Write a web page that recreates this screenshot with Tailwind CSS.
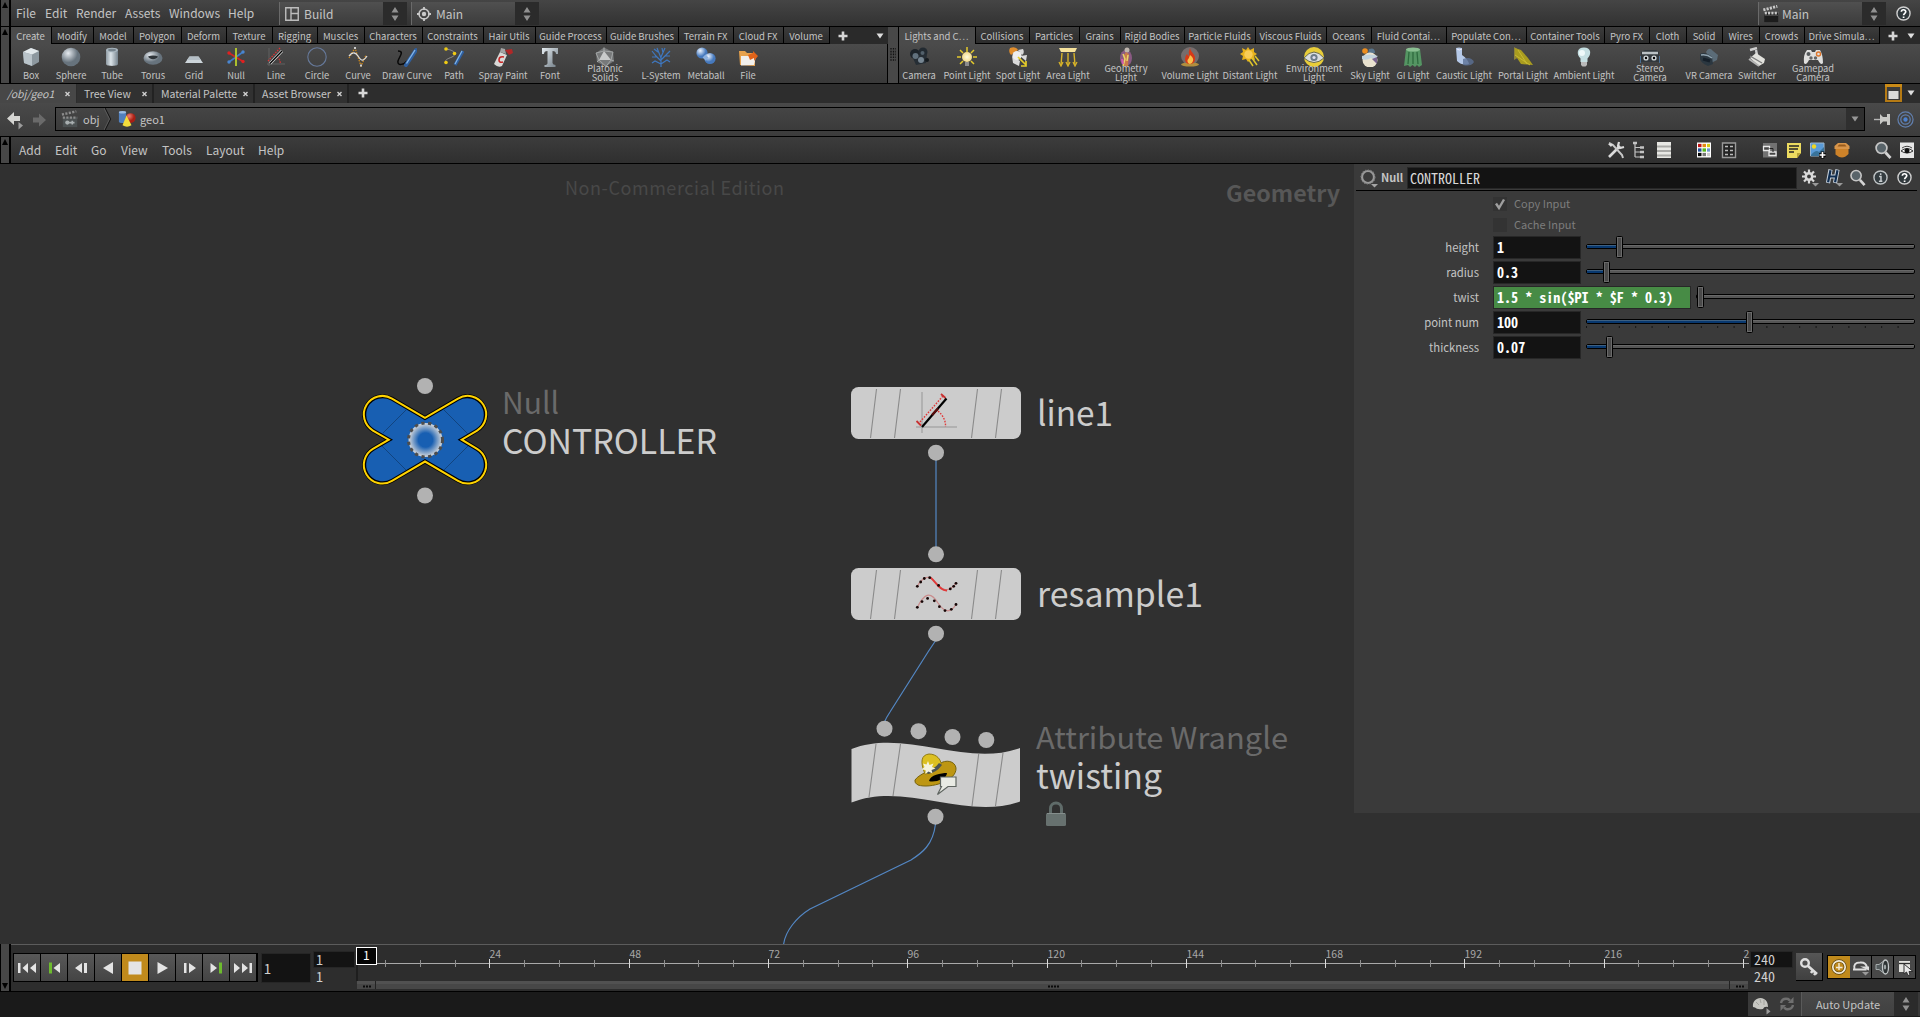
<!DOCTYPE html>
<html lang="en">
<head>
<meta charset="utf-8">
<title>/obj/geo1</title>
<script src="https://cdn.jsdelivr.net/npm/@tailwindcss/browser@4"></script>
</head>
<body class="h-[1017px] w-[1920px] overflow-hidden bg-[#1a1a1a] font-['Noto_Sans_CJK_SC',sans-serif] text-[#c4c4c4]">
<div class="flex h-full flex-col">

  <!-- main menu -->
  <header class="flex h-[27px] shrink-0 border-b border-black bg-linear-to-b from-[#454545] to-[#323232]">
    <div data-grip="up"></div>
    <nav class="flex w-[268px] items-center pb-px pl-[5px] text-[12px] leading-none" data-menu="File:29,Edit:31,Render:49,Assets:44,Windows:59,Help:50"></nav>
    <div class="mt-[2px] flex h-[23px] w-[104px] items-center border-l border-[#6a6a6a] bg-linear-to-b from-[#505050] to-[#3c3c3c]">
      <span class="ml-[5px] h-[14px] w-[14px]" data-i="layout"></span><span class="ml-[5px] text-[12px] leading-none">Build</span>
    </div>
    <div class="mt-[2px] flex h-[23px] w-[24px] items-center justify-center bg-[#2b2b2b]"><span class="h-[14px] w-[8px]" data-i="spin"></span></div>
    <div class="mt-[2px] ml-[4px] flex h-[23px] w-[104px] items-center border-l border-[#6a6a6a] bg-linear-to-b from-[#505050] to-[#3c3c3c]">
      <span class="ml-[4px] h-[16px] w-[16px]" data-i="target"></span><span class="ml-[4px] text-[12px] leading-none">Main</span>
    </div>
    <div class="mt-[2px] flex h-[23px] w-[24px] items-center justify-center bg-[#2b2b2b]"><span class="h-[14px] w-[8px]" data-i="spin"></span></div>
    <div class="grow"></div>
    <div class="mt-[2px] flex h-[23px] w-[104px] items-center border-l border-[#6a6a6a] bg-linear-to-b from-[#505050] to-[#3c3c3c]">
      <span class="ml-[3px] h-[18px] w-[18px]" data-i="clapper"></span><span class="ml-[2px] text-[12px] leading-none">Main</span>
    </div>
    <div class="mt-[2px] flex h-[23px] w-[24px] items-center justify-center bg-[#2b2b2b]"><span class="h-[14px] w-[8px]" data-i="spin"></span></div>
    <div class="flex w-[34px] items-center justify-center"><span class="h-[15px] w-[15px]" data-i="help"></span></div>
  </header>

  <!-- shelves -->
  <section class="flex h-[57px] shrink-0 border-b border-black">
    <div data-grip="up"></div>
    <div class="flex w-[877px] flex-col">
      <div class="flex h-[17px] bg-[#2a2a2a]">
        <div class="flex" data-tabs="Create:41,Modify:42,Model:40,Polygon:48,Deform:45,Texture:46,Rigging:45,Muscles:47,Characters:58,Constraints:61,Hair Utils:52,Guide Process:71,Guide Brushes:72,Terrain FX:55,Cloud FX:50,Volume:46"></div>
        <span class="ml-[8px] mt-[4px] h-[10px] w-[10px]" data-i="plus"></span>
        <span class="ml-[28px] mt-[6px] h-[6px] w-[8px]" data-i="down"></span>
      </div>
      <div class="flex h-[39px] border-r border-black bg-linear-to-b from-[#4b4b4b] to-[#393939] pl-[2px]" data-start="13" data-tools="Box@31:box,Sphere@71:sphere,Tube@112:tube,Torus@153:torus,Grid@194:grid,Null@236:nul,Line@276:line,Circle@317:circle,Curve@358:curve,Draw Curve@407:draw,Path@454:path,Spray Paint@503:spray,Font@550:font,Platonic|Solids@605:plato,L-System@661:lsys,Metaball@706:meta,File@748:file"></div>
    </div>
    <div class="flex w-[11px] items-center justify-center border-r border-black bg-[#484848]"><span class="h-[14px] w-[6px]" data-i="grid3"></span></div>
    <div class="flex w-[1021px] flex-col">
      <div class="flex h-[17px] bg-[#2a2a2a]">
        <div class="flex" data-tabs="Lights and C…:77,Collisions:54,Particles:50,Grains:41,Rigid Bodies:64,Particle Fluids:71,Viscous Fluids:71,Oceans:45,Fluid Contai…:75,Populate Con…:80,Container Tools:78,Pyro FX:45,Cloth:37,Solid:36,Wires:37,Crowds:45,Drive Simula…:75"></div>
        <span class="ml-[8px] mt-[4px] h-[10px] w-[10px]" data-i="plus"></span>
        <span class="ml-[9px] mt-[6px] h-[6px] w-[8px]" data-i="down"></span>
      </div>
      <div class="flex h-[39px] bg-linear-to-b from-[#4b4b4b] to-[#393939] pl-[1px]" data-start="900" data-tools="Camera@919:camera,Point Light@967:point,Spot Light@1018:spot,Area Light@1068:area,Geometry|Light@1126:geol,Volume Light@1190:fire,Distant Light@1250:sun,Environment|Light@1314:env,Sky Light@1370:sky,GI Light@1413:gi,Caustic Light@1464:caustic,Portal Light@1523:portal,Ambient Light@1584:bulb,Stereo|Camera@1650:stereo,VR Camera@1709:vr,Switcher@1757:switch,Gamepad|Camera@1813:pad"></div>
    </div>
  </section>

  <!-- pane tabs -->
  <div class="flex h-[19px] shrink-0 items-stretch bg-[#2d2d2d] text-[10.5px] leading-[19px] whitespace-nowrap">
    <div class="flex w-[76px] justify-between bg-[#474747] pl-[7px] pr-[6px] italic"><span>/obj/geo1</span><span class="h-[19px] w-[5px]" data-i="close"></span></div>
    <div class="ml-px flex w-[77px] justify-between border-r-2 border-[#222] bg-[#313131] pl-[7px] pr-[5px]"><span>Tree View</span><span class="h-[19px] w-[5px]" data-i="close"></span></div>
    <div class="flex w-[101px] justify-between border-r-2 border-[#222] bg-[#313131] pl-[7px] pr-[5px]"><span>Material Palette</span><span class="h-[19px] w-[5px]" data-i="close"></span></div>
    <div class="flex w-[94px] justify-between border-r-2 border-[#222] bg-[#313131] pl-[7px] pr-[5px]"><span>Asset Browser</span><span class="h-[19px] w-[5px]" data-i="close"></span></div>
    <span class="mt-[4px] ml-[9px] h-[10px] w-[10px]" data-i="plus"></span>
    <div class="grow"></div>
    <span class="mr-[5px] h-[18px] w-[17px]" data-i="pane"></span>
    <span class="mt-[6px] mr-[5px] h-[6px] w-[8px]" data-i="down"></span>
  </div>

  <!-- path bar -->
  <div class="flex h-[34px] shrink-0 items-center border-b border-black bg-linear-to-b from-[#494949] to-[#3c3c3c] pb-px">
    <span class="ml-[6px] mt-[4px] h-[18px] w-[18px]" data-i="back"></span>
    <span class="ml-[7px] mt-[1px] h-[18px] w-[18px]" data-i="fwd"></span>
    <div class="ml-[6px] flex h-[24px] w-[1810px] items-center border border-black bg-linear-to-b from-[#454545] to-[#3b3b3b] text-[11px] leading-none">
      <span class="ml-[5px] h-[18px] w-[18px]" data-i="clapper2"></span><span class="ml-[4px] w-[21px]">obj</span>
      <span class="h-[22px] w-[8px]" data-i="chev"></span>
      <span class="ml-[6px] h-[18px] w-[18px]" data-i="geo"></span><span class="ml-[4px]">geo1</span>
      <div class="grow"></div>
      <div class="flex h-full w-[18px] items-center justify-center bg-[#2f2f2f]"><span class="h-[6px] w-[8px] opacity-60" data-i="down"></span></div>
    </div>
    <span class="ml-[9px] h-[16px] w-[17px]" data-i="pin"></span>
    <span class="ml-[6px] h-[17px] w-[17px]" data-i="radial"></span>
  </div>

  <!-- network menu -->
  <div class="flex h-[27px] shrink-0 border-b border-black bg-linear-to-b from-[#3c3c3c] to-[#2f2f2f]">
    <div data-grip="up"></div>
    <nav class="flex items-center pb-px pl-[8px] text-[12px] leading-none" data-menu="Add:36,Edit:36,Go:30,View:41,Tools:44,Layout:52,Help:50"></nav>
    <div class="grow"></div>
    <div class="flex items-center pr-[4px]">
      <span class="h-[18px] w-[18px]" data-i="wrench"></span>
      <span class="ml-[6px] h-[18px] w-[18px]" data-i="tree"></span>
      <span class="ml-[6px] h-[18px] w-[18px]" data-i="list"></span>
      <span class="ml-[22px] h-[18px] w-[18px]" data-i="palette"></span>
      <span class="ml-[7px] h-[18px] w-[18px]" data-i="table"></span>
      <span class="ml-[23px] h-[18px] w-[18px]" data-i="boxes"></span>
      <span class="ml-[6px] h-[18px] w-[18px]" data-i="note"></span>
      <span class="ml-[6px] h-[18px] w-[18px]" data-i="image"></span>
      <span class="ml-[6px] h-[18px] w-[18px]" data-i="crate"></span>
      <span class="ml-[23px] h-[18px] w-[18px]" data-i="search"></span>
      <span class="ml-[6px] h-[18px] w-[18px]" data-i="eye"></span>
    </div>
  </div>

  <!-- network canvas and parameters -->
  <main class="relative h-[780px] shrink-0 bg-[#303030]">
    <svg class="absolute inset-0 h-[780px] w-[1354px]" viewBox="0 164 1354 780">
      <defs>
        <radialGradient id="core"><stop offset=".42" stop-color="#185fb2"/><stop offset=".95" stop-color="#c9d0d8"/></radialGradient>
        <g id="slats" stroke="#8a8a8a" stroke-width="1.1"><path d="M876.500 389L870.500 438M900.500 389L894.500 438M977.500 389L971.500 438M1001.500 389L995.500 438"/></g>
      </defs>
      <text x="565" y="194.500" font-size="18" fill="#484848" textLength="219">Non-Commercial Edition</text>
      <text x="1226" y="202" font-size="22" font-weight="700" fill="#575757" textLength="114" lengthAdjust="spacingAndGlyphs">Geometry</text>
      <g fill="none" stroke="#5387c4" stroke-width="1.2">
        <path d="M936 460V547M936 640L928 652L890 712Q886 718 884.500 722M935.500 824C933 845 922 853 911 860L810 909C797 917 785 931 783.500 945"/>
      </g>
      <!-- null node -->
      <path d="M425 418L392.200 398.800A18.500 18.500 0 1 0 373.200 430.600L389 439.700L373.200 448.800A18.500 18.500 0 1 0 392.200 480.600L425 461.400L457.800 480.600A18.500 18.500 0 1 0 476.800 448.800L461.500 439.700L476.800 430.600A18.500 18.500 0 1 0 457.800 398.800Z" fill="#185fb2" stroke="#000" stroke-width="4"/>
      <path d="M425 418L392.200 398.800A18.500 18.500 0 1 0 373.200 430.600L389 439.700L373.200 448.800A18.500 18.500 0 1 0 392.200 480.600L425 461.400L457.800 480.600A18.500 18.500 0 1 0 476.800 448.800L461.500 439.700L476.800 430.600A18.500 18.500 0 1 0 457.800 398.800Z" fill="none" stroke="#ffd300" stroke-width="2" transform="translate(425 439.700) scale(1.006) translate(-425 -439.700)"/>
      <path d="M406 410L383 433M444 410L468 434M382 446L406 470M468 446L444 470" stroke="#114480" stroke-width="1"/>
      <circle cx="425.500" cy="440" r="17" fill="url(#core)"/>
      <circle cx="425.500" cy="440" r="17" fill="none" stroke="#4d4d4d" stroke-width="3" stroke-dasharray="3.300 3.550"/>
      <g fill="#b2b2b2">
        <circle cx="425" cy="386" r="8"/><circle cx="425" cy="495.500" r="8"/>
        <circle cx="936" cy="452.700" r="8"/><circle cx="936" cy="554.300" r="8"/><circle cx="936" cy="633.700" r="8"/>
        <circle cx="884.500" cy="728.700" r="8"/><circle cx="918.500" cy="731.200" r="8"/><circle cx="952.500" cy="737" r="8"/><circle cx="986.300" cy="740" r="8"/>
        <circle cx="935.500" cy="816.700" r="8"/>
      </g>
      <!-- line1 -->
      <rect x="851" y="387" width="170" height="52" rx="7.500" fill="#cccccc"/><use href="#slats"/>
      <path d="M922 392V433M916 427H957" stroke="#a8a8a8" stroke-width="1.500"/>
      <path d="M920 422L943 396M938 411Q946 418 945.500 427" fill="none" stroke="#e03a3a" stroke-width="1.400" stroke-dasharray="1.600 1.400"/>
      <path d="M916.500 421L921 425.500M941 394L945.500 398" stroke="#c83232" stroke-width="1.800"/>
      <path d="M922 427L946.500 398.500" stroke="#000" stroke-width="2.200"/><path d="M932 415L938 408.500" stroke="#5a0c0c" stroke-width="2.200"/>
      <!-- resample1 -->
      <rect x="851" y="568" width="170" height="52" rx="7.500" fill="#cccccc"/><use href="#slats" y="181"/>
      <g fill="none" stroke="#c98d8d" stroke-width="1.300">
        <path d="M917.200 586.300C922 578 928 573 936 583C943 592 949 592 956 583.300M917.200 607.500C924 594 930 590 938 603C944 612 950 614 956 604.500"/>
        <path d="M930.500 577.500C936 582 940 591 947 590.500" stroke="#e03a3a" stroke-width="1.800"/>
      </g>
      <g fill="#160606">
        <circle cx="917.300" cy="586.300" r="1.400"/><circle cx="920.700" cy="582" r="1.400"/><circle cx="924.300" cy="578.500" r="1.400"/><circle cx="929.700" cy="577.700" r="1.400"/><circle cx="938.600" cy="585.400" r="1.400"/><circle cx="950.300" cy="588.900" r="1.400"/><circle cx="953.700" cy="586.300" r="1.400"/><circle cx="956" cy="583.300" r="1.400"/>
        <circle cx="917.300" cy="607.300" r="1.400"/><circle cx="922" cy="601.600" r="1.400"/><circle cx="927.600" cy="598.400" r="1.400"/><circle cx="934.300" cy="600.800" r="1.400"/><circle cx="939.400" cy="606.700" r="1.400"/><circle cx="945" cy="610.600" r="1.400"/><circle cx="951.300" cy="609.300" r="1.400"/><circle cx="956" cy="604.500" r="1.400"/>
      </g>
      <!-- twisting -->
      <path d="M851.500 749C905 728 966 768 1020 748V801.500C966 821 905 781 851.500 802.500Z" fill="#cccccc"/>
      <path d="M876 744L869 797M900.500 744L893 796M978.700 754L972 806M1003 753L995.500 806" stroke="#8a8a8a" stroke-width="1.100"/>
      <path d="M915 780C920 773 932 771 939 764C946 759 955 761 956 768C957 781 930 789 918 785Q914 783 915 780Z" fill="#bd9612" stroke="#77630f"/>
      <path d="M925 774C920 762 921 755 929 754C937 754 941 760 941 764C938 769 932 773 925 774Z" fill="#dcc021" stroke="#8f7a15"/>
      <path d="M925 771Q934 770 939 763L942 765Q936 773 928 774Z" fill="#4a5355"/>
      <path d="M929 781C930 775 941 773 947 773C947 779 934 783 929 781Z" fill="#000"/>
      <path d="M928 761l1.500 4 4-1.500-1.500 3.500 3.500 1.500-4 1.500 1 3.500-4-2-3 2.500v-4l-4-.5 3-2.500-1.500-3.500 3.500 1z" fill="#f4f2dd"/>
      <path d="M940.500 777H956V786.500H948L937.500 794.500L941.500 786.500H940.500Z" fill="#e9ebe4" stroke="#5f6560" stroke-width="1.200"/>
      <!-- labels -->
      <g font-size="34" fill="#cccccc">
        <text x="502" y="454" textLength="215" lengthAdjust="spacingAndGlyphs">CONTROLLER</text>
        <text x="1037" y="426" textLength="76" lengthAdjust="spacingAndGlyphs">line1</text>
        <text x="1037" y="607" textLength="166" lengthAdjust="spacingAndGlyphs">resample1</text>
        <text x="1036" y="789" textLength="126" lengthAdjust="spacingAndGlyphs">twisting</text>
      </g>
      <g font-size="30" fill="#6a6a6a">
        <text x="502" y="414" textLength="57" lengthAdjust="spacingAndGlyphs">Null</text>
        <text x="1036" y="748.500" textLength="252" lengthAdjust="spacingAndGlyphs">Attribute Wrangle</text>
      </g>
      <path d="M1050.500 814V808.500A5.500 5.500 0 0 1 1061.500 808.500V814" fill="none" stroke="#5f6b69" stroke-width="3"/><rect x="1046" y="813" width="20" height="13" rx="1.500" fill="#67716f"/><path d="M1047 813.500H1065" stroke="#858e8c"/>
    </svg>

    <aside class="absolute top-0 right-0 h-[649px] w-[566px] bg-[#3a3a3a]">
      <div class="ml-[2px] mr-[3px] flex h-[27px] items-center border-b border-black">
        <span class="ml-[4px] mt-[2px] h-[20px] w-[18px]" data-i="ring"></span>
        <span class="ml-[3px] w-[26px] text-[11px] leading-none font-bold">Null</span>
        <div class="mt-px flex h-[22px] w-[390px] items-center border border-[#272727] bg-[#131313] pl-[2px] font-['Noto_Sans_Mono_CJK_SC','DejaVu_Sans_Mono',monospace] text-[14px] leading-none text-[#d8d8d8]">CONTROLLER</div>
        <span class="ml-[4px] h-[20px] w-[18px]" data-i="gear"></span>
        <span class="ml-[6px] h-[20px] w-[18px]" data-i="hlogo"></span>
        <span class="ml-[6px] h-[17px] w-[17px]" data-i="search"></span>
        <span class="ml-[7px] h-[15px] w-[15px]" data-i="info"></span>
        <span class="ml-[9px] h-[15px] w-[15px]" data-i="help"></span>
      </div>
      <div class="mt-[2px] flex h-[21px] items-center pl-[139px] text-[11px] leading-none text-[#7d7d7d]"><span class="mr-[7px] h-[14px] w-[14px] bg-[#333]" data-i="check"></span>Copy Input</div>
      <div class="flex h-[21px] items-center pl-[139px] text-[11px] leading-none text-[#7d7d7d]"><span class="mr-[7px] h-[14px] w-[14px] bg-[#333]"></span>Cache Input</div>
      <div id="params"></div>
    </aside>
  </main>

  <!-- playbar -->
  <section class="flex h-[48px] shrink-0 border-b border-black bg-[#2d2d2d]">
    <div data-grip="down"></div>
    <div class="flex h-full w-[1909px] border-t border-[#5c5c5c]">
      <div class="mt-[8px] ml-[2px] flex h-[29px] w-[245px] shrink-0 border border-black bg-black" id="play"></div>
      <div class="mt-[8px] ml-[3px] flex h-[30px] w-[50px] shrink-0 items-center border border-[#262626] bg-[#131313] pl-[2px] font-['Noto_Sans_Mono_CJK_SC','DejaVu_Sans_Mono',monospace] text-[14px] leading-none text-[#d0d0d0]">1</div>
      <div class="ml-[2px] w-[42px] shrink-0 pt-[6px] font-['Noto_Sans_Mono_CJK_SC','DejaVu_Sans_Mono',monospace] text-[14px] text-[#d0d0d0]">
        <div class="h-[17px] border border-[#262626] bg-[#131313] pl-[2px] leading-[15px]">1</div>
        <div class="h-[17px] pl-[3px] leading-[17px]">1</div>
      </div>
      <svg class="ml-px h-[46px] w-[1394px] shrink-0" viewBox="356 945 1394 46" id="time"></svg>
      <div class="w-[43px] shrink-0 pt-[6px] font-['Noto_Sans_Mono_CJK_SC','DejaVu_Sans_Mono',monospace] text-[14px] text-[#d0d0d0]">
        <div class="h-[17px] border border-[#262626] bg-[#131313] pl-[3px] leading-[15px]">240</div>
        <div class="h-[17px] pl-[4px] leading-[17px]">240</div>
      </div>
      <div class="mt-[8px] ml-[3px] flex h-[28px] w-[27px] shrink-0 items-center justify-center border-r border-b border-black bg-linear-to-b from-[#565656] to-[#404040]"><span class="h-[20px] w-[20px]" data-i="key"></span></div>
      <div class="mt-[10px] ml-[4px] flex h-[24px] shrink-0 border border-black">
        <div class="flex w-[22px] items-center justify-center bg-[#c08a1c]"><span class="h-[16px] w-[16px]" data-i="clock"></span></div>
        <div class="flex w-[22px] items-center justify-center border-r border-black bg-[#484848]"><span class="h-[18px] w-[18px]" data-i="loop"></span></div>
        <div class="flex w-[22px] items-center justify-center border-r border-black bg-[#484848]"><span class="h-[18px] w-[18px]" data-i="audio"></span></div>
        <div class="flex w-[21px] items-center justify-center bg-[#484848]"><span class="h-[18px] w-[18px]" data-i="cursor"></span></div>
      </div>
    </div>
  </section>

  <!-- status -->
  <footer class="flex h-[25px] shrink-0 justify-end">
    <div class="flex h-[24px] w-[172px] bg-[#393939]">
      <span class="mt-[3px] ml-[3px] h-[20px] w-[20px]" data-i="brain"></span>
      <span class="mt-[4px] ml-[8px] h-[16px] w-[16px] opacity-50" data-i="refresh"></span>
      <div class="ml-[6px] flex w-[93px] items-center justify-center border-l border-[#5a5a5a] bg-linear-to-b from-[#4a4a4a] to-[#404040] text-[11px] leading-none">Auto Update</div>
      <div class="flex w-[24px] items-center justify-center bg-[#2b2b2b]"><span class="h-[14px] w-[8px]" data-i="spin"></span></div>
    </div>
  </footer>
</div>

<svg class="absolute h-0 w-0"><defs>
  <linearGradient id="st" x1="0" x2="1" y1="0" y2="1"><stop stop-color="#e6edf2"/><stop offset="1" stop-color="#6f7b84"/></linearGradient>
  <radialGradient id="sp" cx=".35" cy=".3"><stop stop-color="#e6ebf0"/><stop offset="1" stop-color="#67737d"/></radialGradient>
  <radialGradient id="bl" cx=".35" cy=".3"><stop stop-color="#eef5ff"/><stop offset="1" stop-color="#4679bd"/></radialGradient>
  <radialGradient id="rd" cx=".35" cy=".3"><stop stop-color="#f07f70"/><stop offset="1" stop-color="#a81f14"/></radialGradient>
  <linearGradient id="cy"><stop stop-color="#8e9aa3"/><stop offset=".4" stop-color="#dbe3e8"/><stop offset="1" stop-color="#75828c"/></linearGradient>
  <radialGradient id="glow"><stop stop-color="#fffbe0"/><stop offset="1" stop-color="#f3d98a"/></radialGradient>
</defs></svg>

<script>
const icons = {
  spin: ['8 14', '<path d="M4 0L7.500 5.500H.5ZM4 14L7.500 8.500H.5Z" fill="#909090"/>'],
  close: ['5 19', '<path d="M.5 8L4.500 12M4.500 8L.5 12" stroke="#cfcfcf" stroke-width="1.400"/>'],
  plus: ['10 10', '<path d="M5 .5V9.500M.5 5H9.500" stroke="#d6d6d6" stroke-width="2.600"/>'],
  down: ['8 6', '<path d="M.5 .5H7.500L4 5.500Z" fill="#dedede"/>'],
  grid3: ['6 14', '<path d="M1 0V14M3.500 0V14M6 0V14" stroke="#111" stroke-width="1.300" stroke-dasharray="1.600 1.200"/>'],
  layout: ['14 14', '<path d="M.75.75H13.250V13.250H.75ZM6 1V13M6 6.500H13" stroke="#bdbdbd" stroke-width="1.400" fill="none"/>'],
  target: ['16 16', '<circle cx="8" cy="8" r="5" fill="none" stroke="#c9c9c9" stroke-width="1.500"/><circle cx="8" cy="8" r="2.200" fill="#c9c9c9"/><path d="M8 1V4M8 12V15M1 8H4M12 8H15" stroke="#c9c9c9" stroke-width="1.800"/>'],
  clapper: ['20 20', '<path d="M2.500 9H18V19H2.500Z" fill="#1c1c1c"/><path d="M1.500 5.500L17 1.500M3 9H18" stroke="#c9c9c9" stroke-width="3.200" stroke-dasharray="2.400 1.300"/><path d="M3 11.500H18" stroke="#555"/>'],
  clapper2: ['20 20', '<path d="M2 8H18V19H2Z" fill="#4c5152"/><path d="M1 5L17 1.500M2 8.500H18" stroke="#8b8b8b" stroke-width="2.600" stroke-dasharray="2.400 1.500"/><circle cx="7" cy="14" r="2.300" fill="#a9afb0"/><path d="M9 14H15M12.500 12V16" stroke="#a9afb0" stroke-width="1.800"/>'],
  help: ['16 16', '<circle cx="8" cy="8" r="7" fill="#30383c" stroke="#cfcfcf" stroke-width="1.500"/><path d="M5.700 6.200C5.800 3.200 10.500 3.300 10.400 6.200C10.300 7.800 8.200 7.900 8.100 9.900M8.100 11.200V12.900" fill="none" stroke="#fff" stroke-width="1.800"/>'],
  info: ['16 16', '<circle cx="8" cy="8" r="7" fill="#343c40" stroke="#bfc4c6" stroke-width="1.500"/><path d="M6.500 7H8.500V12M6.300 12H10M8.200 3.500V5.200" fill="none" stroke="#c9ced0" stroke-width="1.600"/>'],
  box: ['20 20', '<path d="M2 5L10 1L18 4V15L11 19L3 16Z" fill="#8d989f"/><path d="M2 5L10 1L18 4L11 7.500Z" fill="#e2e8eb"/><path d="M2 5L11 7.500V19L3 16Z" fill="#b9c3c9"/>'],
  sphere: ['20 20', '<circle cx="10" cy="10" r="9.300" fill="url(#sp)"/>'],
  tube: ['20 20', '<path d="M4 3V17C4 19.500 16 19.500 16 17V3Z" fill="url(#cy)"/><ellipse cx="10" cy="3" rx="6" ry="2.300" fill="#a9b6bf"/><ellipse cx="10" cy="3" rx="4" ry="1.300" fill="#76838c"/>'],
  torus: ['20 20', '<ellipse cx="10" cy="11" rx="9.500" ry="6.800" fill="url(#sp)"/><path d="M5 9.500C7 13 13 13 15 9.500C12 8 8 8 5 9.500Z" fill="#2e3439"/>'],
  grid: ['20 20', '<path d="M5.500 9.500H14.500L19 16H1Z" fill="#cdd5da"/><path d="M5.500 9.500H14.500L17 13H3Z" fill="#b4bec5"/>'],
  nul: ['20 20', '<path d="M3 15L17 5" stroke="#3f7bc8" stroke-width="1.600"/><path d="M3 6L17 14.500" stroke="#d12525" stroke-width="1.600"/><path d="M10 1V19" stroke="#b9cf2c" stroke-width="1.800"/><circle cx="3" cy="6" r="1.700" fill="#e02020"/><circle cx="17" cy="14.500" r="1.700" fill="#e02020"/><circle cx="17" cy="5" r="1.700" fill="#4a86d0"/><circle cx="3" cy="15" r="1.700" fill="#4a86d0"/>'],
  line: ['20 20', '<path d="M3 1V19M1 17H19" stroke="#606060"/><path d="M2 14L14 1M11 10Q15 13 14 17" stroke="#d33" stroke-dasharray="1.500 1.200" fill="none" stroke-width="1.300"/><path d="M4 16.500L16 4" stroke="#d9d9d9" stroke-width="2.800"/><path d="M4 16.500L16 4" stroke="#000" stroke-width="1.300"/>'],
  circle: ['20 20', '<circle cx="10" cy="10" r="9.200" fill="none" stroke="#66799a" stroke-width="1.100"/>'],
  curve: ['20 20', '<path d="M1 11L7 1L13 19L18 8" fill="none" stroke="#d08a1c" stroke-width="1.300" stroke-dasharray="1.500 1.200"/><path d="M1 9C5 4 8 6 10 9C13 14 15 15 19 9" fill="none" stroke="#dcdcdc" stroke-width="1.300"/><path d="M6 1H8M12 18.500H14" stroke="#ccc" stroke-width="2"/>'],
  draw: ['20 20', '<path d="M1 4C8 4 2 10 1 14C0 19 7 18 10 14" fill="none" stroke="#080808" stroke-width="1.500"/><path d="M9 18L19 3" stroke="#2f5f9f" stroke-width="4" stroke-linecap="round"/><path d="M9.500 16.500L18 3" stroke="#85b6e8" stroke-width="1.400"/>'],
  path: ['20 20', '<path d="M2 2C10 3 14 7 8 10C3 12 1 13 1.500 15" fill="none" stroke="#8b8b8b"/><circle cx="2" cy="2" r="1.800" fill="#f0cb13"/><circle cx="10.500" cy="6.500" r="1.800" fill="#f0cb13"/><circle cx="2" cy="15.500" r="1.800" fill="#f0cb13"/><path d="M11 18L19 4" stroke="#2f5f9f" stroke-width="3.300"/><path d="M11 17L18 4" stroke="#85b6e8" stroke-width="1.200"/>'],
  spray: ['20 20', '<path d="M7 5L14 8L9 19Q5 21 1 17Z" fill="#d9d9d7"/><path d="M8 1L12 2L13 7L7 5Z" fill="#a5a5a5"/><path d="M11 10Q6 9 6 13Q6 16 10 15" stroke="#c92525" stroke-width="1.600" fill="none"/><path d="M12 3L19 2L20 6L16 8Z" fill="#bd2525" opacity=".9"/>'],
  font: ['20 20', '<path d="M2 1H18V7H16Q16 4 12.500 4V16Q13 18 15.500 18V20H4.500V18Q7.500 18 7.500 16V4Q4 4 4 7H2Z" fill="url(#st)"/>'],
  plato: ['20 20', '<path d="M9 .5L18 5L19 14L11 19.500L2 15L1 6Z" fill="#77797a"/><path d="M9 4L16 13L4 13Z" fill="#c9cbcb"/><path d="M9 .5V4L1 6M9 4L18 5L16 13L19 14M16 13L11 19.500L4 13L2 15M4 13L1 6" fill="none" stroke="#a8abac" stroke-width=".9"/>'],
  lsys: ['20 20', '<path d="M10 20V10M10 14L4 8M10 11L6 1M10 13L16 7M10 10L14 1M6 10H1M5 9L1 4M7 5L3 2M14 9H19M15 8L19 4M12 6L11 1M10 17L4 14L1 16M10 17L16 13L19 15" fill="none" stroke="#3f78c0" stroke-width="1.200"/>'],
  meta: ['20 20', '<circle cx="6" cy="6" r="5.600" fill="url(#bl)"/><circle cx="14" cy="11.500" r="5.600" fill="url(#bl)"/><path d="M8 9L11 12" stroke="#8db1df" stroke-width="4"/>'],
  file: ['20 20', '<path d="M1 4H7L9 6H17V19L2 18Z" fill="#e8a24c"/><path d="M3 9H18L16 18L3 18.500Z" fill="#f1efec"/><path d="M10 8L15 6V4L20 9L16 14V11L12 13Z" fill="#e0631a"/>'],
  camera: ['20 20', '<circle cx="6" cy="7" r="5" fill="#1d242a"/><circle cx="14" cy="5" r="4.500" fill="#222a31"/><path d="M3 9L18 7L17 16L7 18Z" fill="#262e35"/><circle cx="6.500" cy="9" r="3" fill="#61717d"/><circle cx="13.500" cy="6" r="2" fill="#52606b"/><circle cx="12" cy="13" r="3" fill="#778692"/><circle cx="18" cy="13" r="2" fill="#151a1e"/>'],
  point: ['20 20', '<path d="M10 0V5M3 3L6 6M17 3L14 6M0 10H4M20 10H16M3 17L6 14M17 17L14 14" stroke="#e3c92c" stroke-width="1.500"/><circle cx="10" cy="10" r="5" fill="url(#glow)"/><path d="M8 15H12V19H8Z" fill="#8b8b8b"/>'],
  spot: ['20 20', '<path d="M2 1Q8-1 10 3L3 8Q0 5 2 1Z" fill="#e08d2c"/><path d="M10 3L15 2Q17 6 14 8ZM4 9L5 16L11 19L12 14ZM12 9L19 8L18 14Z" fill="#dadada"/><circle cx="9" cy="8.500" r="4.500" fill="#eee"/><path d="M10 10L18 18M18 14V19H13" stroke="#e6cd29" stroke-width="1.700" fill="none"/>'],
  area: ['20 20', '<path d="M1 1H19L17 5H3Z" fill="#f7e39b"/><path d="M4 6L3 18M10 6V18M16 6L17 18" stroke="#d8b429" stroke-width="1.400"/><path d="M1 15L3 19L5 15M8 15L10 19L12 15M15 15L17 19L19 15" stroke="#d8b429" fill="none" stroke-width="1.300"/>'],
  geol: ['20 20', '<ellipse cx="10" cy="11" rx="6" ry="8" fill="#8a5a83"/><circle cx="11" cy="3" r="2.500" fill="#bfb6ae"/><path d="M10 5L13 7L12 19H7L8 8Z" fill="#c97b4a"/><path d="M7 7L9 12L7 19M12 8L11 14" stroke="#e9d36b" stroke-width="1.500" fill="none"/><path d="M6 12L7 17" stroke="#d05bb0" stroke-width="2"/>'],
  fire: ['20 20', '<circle cx="10" cy="9" r="9" fill="#857979" opacity=".75"/><ellipse cx="10" cy="17.500" rx="9" ry="2" fill="#b28e3d"/><path d="M10 1C11 6 16 7 15 13Q14 17 10 17Q5 17 5 12Q5 9 7 7Q8 9 9 9Q8 5 10 1Z" fill="#d83a16"/><path d="M10 8Q14 11 13 14Q12 17 10 17Q7 16 7.500 13Q9 12 10 8Z" fill="#f9c04b"/>'],
  sun: ['20 20', '<path d="M8 0L10 3L14 1V5L17 7L14 9L15 13L11 12L8 15L6 12L2 13L3 9L0 7L3 5L2 1L6 3Z" fill="#e8b21d"/><circle cx="8.500" cy="7.500" r="4.200" fill="#f9cd57"/><path d="M9 13L13 19M12 11L17 18M15 9L19 14" stroke="#dfc52a" stroke-width="1.500"/>'],
  env: ['20 20', '<circle cx="10" cy="10" r="10" fill="#e8cd39"/><path d="M0 11Q10-1 20 11Q10 20 0 11Z" fill="#d9dde0" stroke="#6a6a4a"/><circle cx="10" cy="10.500" r="3.600" fill="#6c7c8a"/><circle cx="10" cy="10.500" r="1.600" fill="#dde"/>'],
  sky: ['20 20', '<circle cx="5" cy="4" r="2.800" fill="#ee8e1e"/><path d="M9 2Q15 0 15 6H8Z" fill="#59748c"/><circle cx="10" cy="13" r="7.500" fill="#e9e2cf"/><path d="M2 9Q10 6 18 9Q14 13 11 11Q6 14 2 12Z" fill="#c2d2dc"/><path d="M12 12L17 10V17Z" fill="#78628e"/>'],
  gi: ['20 20', '<path d="M3 2H17L19 18L16 20L14 18L12 20L9.500 18L7 20L5 18L1 19Z" fill="#559563"/><ellipse cx="10" cy="2.500" rx="7" ry="2" fill="#8abf91"/><path d="M6 5L5 17M10 5V17M14 5L15 17" stroke="#2e6a3e" stroke-width="1.300"/>'],
  caustic: ['20 20', '<path d="M2 1Q5 0 8 1V8Q14 12 15 17Q8 19 3 14Z" fill="#b5c9e8"/><path d="M9 12Q17 9 20 15Q17 20 9 18Z" fill="#5b7195" opacity=".8"/><path d="M3 2Q5 4 8 2" stroke="#eef" fill="none"/>'],
  portal: ['20 20', '<path d="M1 0L6 3V10L1 13Z" fill="#8f8437"/><path d="M2 1L8 3L15 11L20 18L8 17L2 8Z" fill="#a99c1f"/><path d="M5 3L14 17M2 8L17 18" stroke="#c7ba30"/>'],
  bulb: ['20 20', '<path d="M10 .5C17 .5 18 7 13.500 11.500V15H6.500V11.500C2 7 3 .5 10 .5Z" fill="#c5dfe2"/><circle cx="8" cy="6" r="3" fill="#effafa"/><path d="M7 15H13V18L11.500 19.500H8.500L7 18Z" fill="#b9b9b9"/>'],
  stereo: ['20 20', '<path d="M1 5L5 3H16L19 5V15H1Z" fill="#32383d"/><path d="M2 6H18" stroke="#b9c0c4" stroke-width="2.500"/><circle cx="6" cy="11" r="2.600" fill="#d3d9dc"/><circle cx="14" cy="11" r="2.600" fill="#d3d9dc"/><circle cx="6" cy="11" r="1.200"/><circle cx="14" cy="11" r="1.200"/><path d="M0 9V16M20 9V16" stroke="#4d7fae" stroke-width="1.500"/>'],
  vr: ['20 20', '<path d="M7 5Q10-1 14 4L19 8L18 13L12 16Z" fill="#5b6c78"/><path d="M1 7Q6 4 13 10L14 17L9 19Q2 16 1 12Z" fill="#2b3740"/><path d="M2 8Q8 7 13 11" stroke="#8fa3b0" fill="none" stroke-width="1.500"/><path d="M4 12L11 14" stroke="#16202a" stroke-width="3"/>'],
  switch: ['20 20', '<path d="M3 3L10 1M9 3L10 8" stroke="#cfcfcf" stroke-width="2.400"/><path d="M3 11L9 6L18 12L17 16L12 19Z" fill="#e2e2dd"/><path d="M3 9L15 16" stroke="#7c7c7c" stroke-width="1.400"/><path d="M2 12L12 19" stroke="#b4b4b4" stroke-width="2"/>'],
  pad: ['20 20', '<path d="M4 3H8L9 5H12L13 3H17Q20 8 20 16Q18 19 15 13H6Q3 19 1 16Q0 8 4 3Z" fill="#dfdfdd"/><circle cx="5.500" cy="7" r="2" fill="#55595b"/><circle cx="8" cy="11" r="1.700" fill="#666"/><circle cx="12.500" cy="11" r="1.700" fill="#666"/><circle cx="15.500" cy="7" r="2" fill="none" stroke="#e0762a" stroke-width="1.400"/>'],
  pane: ['17 18', '<path d="M1 1H16V17H1Z" fill="#3c3c3c" stroke="#b57a14" stroke-width="2"/><path d="M0 1.500H17" stroke="#c98a17" stroke-width="3"/><path d="M3.500 7H13.500V15H3.500Z" fill="#dcdcda"/>'],
  back: ['18 18', '<path d="M1 6.500L8 0V4H14V9H8V13Z" fill="#d5d5d2"/><path d="M12.500 10L17 13.500L12.500 17.500Z" fill="#9c9c9c"/>'],
  fwd: ['18 18', '<path d="M15 9L8 2.500V6.500H2V11.500H8V15.500Z" fill="#6a6a6a"/>'],
  chev: ['8 22', '<path d="M1 0L6.500 11L1 22" fill="none" stroke="#151515" stroke-width="1.200"/><path d="M0 0L5.500 11L0 22" fill="none" stroke="#666" stroke-width=".8"/>'],
  geo: ['20 20', '<path d="M1 2V13C1 15 9 15 9 13V2Z" fill="#517fbd"/><ellipse cx="5" cy="2.500" rx="4" ry="1.500" fill="#9bbbe2"/><circle cx="14" cy="9" r="5.500" fill="url(#rd)"/><path d="M9.500 6L15 17Q10 20 5 17Z" fill="#f2dc3c"/>'],
  pin: ['17 16', '<path d="M0 8.500H7" stroke="#b5b5b5" stroke-width="1.400"/><path d="M6 3L9 6H13V3H16V14H13V10.500H9L6 13.500Z" fill="#c9c9c6"/>'],
  radial: ['18 18', '<g fill="none" stroke="#617fae"><circle cx="9" cy="9" r="8" stroke-width="1.300"/><circle cx="9" cy="9" r="5" stroke-width="1.300"/></g><circle cx="9" cy="9" r="2.300" fill="#4d82d0"/>'],
  wrench: ['18 18', '<path d="M2 16L13 5" stroke="#dcdcdc" stroke-width="2.600"/><path d="M12 1L11 5L13 7L17 6" fill="none" stroke="#dcdcdc" stroke-width="2.200"/><path d="M2 2L6 4L15 14L16 17" fill="none" stroke="#c8c8c8" stroke-width="2"/><path d="M1 3L4 6L6 3" fill="#dcdcdc"/>'],
  tree: ['18 18', '<path d="M4 2V16M4 6.500H9M4 11H9M4 16H9" stroke="#c4c4c4" stroke-width="1.200"/><path d="M2 2H6M9 6.500H13M9 11H13M9 16H13" stroke="#c4c4c4" stroke-width="2.600"/>'],
  list: ['18 18', '<path d="M2 1H16V17H2Z" fill="#e8e8e4"/><path d="M2 5.500H16M2 10H16M2 14.500H16" stroke="#a9a9a6" stroke-width="1.800"/>'],
  palette: ['18 18', '<path d="M2 1.500H16V16.500H2Z" fill="#fff"/><path d="M3 4.500H6.500" stroke="#c21515" stroke-width="3.300"/><path d="M7.500 4.500H11" stroke="#e58a12" stroke-width="3.300"/><path d="M12 4.500H15" stroke="#d8cb14" stroke-width="3.300"/><path d="M3 9H6.500" stroke="#244f96" stroke-width="3.300"/><path d="M7.500 9H11" stroke="#55b818" stroke-width="3.300"/><path d="M12 9H15" stroke="#6d95cc" stroke-width="3.300"/><path d="M3 13.500H6.500" stroke="#050505" stroke-width="3.300"/><path d="M7.500 13.500H11" stroke="#777" stroke-width="3.300"/><path d="M12 13.500H15" stroke="#ccc" stroke-width="3.300"/>'],
  table: ['18 18', '<path d="M2.500 2H15.500V16.500H2.500Z" fill="#242424" stroke="#9a9a9a" stroke-width="1.400"/><path d="M5 5.500H8M10 5.500H13M5 9.500H8M10 9.500H13M5 13.500H8M10 13.500H13" stroke="#bcbcbc" stroke-width="1.500"/>'],
  boxes: ['18 18', '<path d="M2 2H16V16.500H2Z" fill="#727272"/><path d="M2.500 5.500H8.500V9.500H2.500ZM8 11H15V14.500H8Z" fill="#444" stroke="#e8e8e8" stroke-width="1.300"/><path d="M8.500 7.500H12V11" fill="none" stroke="#222"/>'],
  note: ['18 18', '<path d="M2 2H16V12L12 17H2Z" fill="#ecdb60"/><path d="M16 12L12 17V12Z" fill="#b7a337"/><path d="M4 5H14M4 8H13M4 11H9" stroke="#252525" stroke-width="1.400"/>'],
  image: ['18 18', '<path d="M1.500 2H15V15H1.500Z" fill="#5a9ad6" stroke="#9db7cd"/><circle cx="5" cy="5.500" r="2.200" fill="#f1d621"/><path d="M2 14Q7 8 10 11L15 6V15H2Z" fill="#39739b"/><path d="M13.500 10.500V17.500M10 14H17" stroke="#000" stroke-width="3.600"/><path d="M13.500 11V17M10.500 14H16.500" stroke="#fff" stroke-width="1.700"/>'],
  crate: ['18 18', '<path d="M2.500 8H15.500V13Q12 16.500 9 16.500Q5 16 2.500 13.500Z" fill="#cd8229"/><path d="M1.500 5L5 2H13L16.500 5V8H1.500Z" fill="#d8954a"/><path d="M4.500 5.500L6 3.500H12L13.500 5.500Z" fill="#9a5c1c"/>'],
  search: ['18 18', '<circle cx="7.500" cy="7" r="5.400" fill="#59646a" stroke="#c6c6c6" stroke-width="1.700"/><path d="M11.500 11.500L16.500 17" stroke="#d4d4d4" stroke-width="2.800"/>'],
  eye: ['18 18', '<path d="M2 1.500H16V17H2Z" fill="#e6e6e6"/><path d="M3 10Q9 5 15 10Q9 14 3 10Z" fill="#fff" stroke="#333" stroke-width="1"/><circle cx="9" cy="9.700" r="2.500" fill="#111"/><path d="M4 7Q9 3.500 14 7" stroke="#444" fill="none"/>'],
  ring: ['18 20', '<circle cx="8" cy="9" r="6" fill="none" stroke="#9a9a9a" stroke-width="2.200"/><circle cx="8" cy="9" r="7" fill="none" stroke="#777" stroke-width="1.200" stroke-dasharray="1.400 1.300"/><path d="M11 16H18L14.500 19.500Z" fill="#a5a5a5"/>'],
  gear: ['18 20', '<g stroke="#d9d9d9" stroke-width="2.200"><path d="M8 2.500V16.500M1 9.500H15M3 4.500L13 14.500M13 4.500L3 14.500"/></g><circle cx="8" cy="9.500" r="4.500" fill="#d9d9d9"/><circle cx="8" cy="9.500" r="1.900" fill="#3a3a3a"/><path d="M11 16H18L14.500 19.500Z" fill="#999"/>'],
  hlogo: ['18 20', '<path d="M5.500 2.500L3 16M12.500 2.500L10 16M4 9.500H11" stroke="#c4ced8" stroke-width="4.200"/><path d="M5.500 3.200L3.100 15.300M12.500 3.200L10.100 15.300M4 9.500H11" stroke="#0e2c50" stroke-width="2.200"/><path d="M11 16H18L14.500 19.500Z" fill="#999"/>'],
  check: ['14 14', '<path d="M3 6.500L6 11L11 2.500" fill="none" stroke="#9f9f9f" stroke-width="2.400"/>'],
  key: ['20 20', '<circle cx="6" cy="6" r="3.800" fill="none" stroke="#dedede" stroke-width="2.400"/><path d="M9 9L18 17M14 13L12 16M17 15.500L15 18" stroke="#dedede" stroke-width="2.600"/>'],
  clock: ['16 16', '<circle cx="8" cy="8" r="6.200" fill="none" stroke="#5a430e" stroke-width="3"/><circle cx="8" cy="8" r="6.200" fill="none" stroke="#f2ead6" stroke-width="1.700"/><path d="M8 4V8.500H11.500M5 8.500H8V11" fill="none" stroke="#f2ead6" stroke-width="1.400"/>'],
  loop: ['18 18', '<path d="M2.500 11Q1 4.500 8 4.500Q14 4 15 9.500" fill="none" stroke="#dedede" stroke-width="1.900"/><path d="M1 11.500H14.500" stroke="#dedede" stroke-width="2"/><path d="M8 8.500H17V12.500Z" fill="#dedede"/><path d="M10 14H17L13.500 17.500Z" fill="#999"/>'],
  audio: ['18 18', '<path d="M2 6.500H5L11 2V16L5 11.500H2Z" fill="#555c5e" stroke="#a6acad"/><ellipse cx="11.500" cy="9" rx="3" ry="7" fill="#2c3233" stroke="#c4c9ca" stroke-width="1.300"/><ellipse cx="11" cy="9" rx="1.200" ry="2.600" fill="#9da4a5"/>'],
  cursor: ['18 18', '<path d="M3 3H14V14H3Z" fill="#e4e4e0"/><path d="M3 5.500H14" stroke="#2d2d2d" stroke-width="1.300"/><path d="M8 6V16L10.500 14L12 17.500L14 17L13 13.500H17Z" fill="#e8e8e8" stroke="#333"/>'],
  brain: ['20 20', '<path d="M2 12C1 5 8 1 13 4Q17 6 17 12Q13 11 12 14Q6 15 4 12.500Z" fill="#c7c7c2"/><path d="M5 7L8 10M9 4L10 8M13 5L13 10" stroke="#a3a39e" fill="none"/><path d="M15.500 13L19.500 16.500L15.500 19.500Z" fill="#9a9a9a"/>'],
  refresh: ['16 16', '<path d="M2 7Q3 2 9 3L11 4.500M14 9Q13 14 7 13L5 11.500" fill="none" stroke="#a5a5a5" stroke-width="2.400"/><path d="M14.500 1V7H9ZM1.500 15V9H7Z" fill="#a5a5a5"/>'],
};
const svg = (n, cls) => `<svg class="${cls}" viewBox="0 0 ${icons[n][0]}">${icons[n][1]}</svg>`;

document.querySelectorAll('[data-grip]').forEach(e => {
  const up = e.dataset.grip === 'up';
  e.className = 'flex w-[11px] shrink-0 flex-col items-center border-r-2 border-l border-black bg-[#474747] px-px py-px';
  if (!up) e.classList.add('justify-end');
  e.innerHTML = `<svg class="h-[8px] w-[8px] shrink-0" viewBox="0 0 8 8"><path d="${up ? 'M4 1L7 7H1Z' : 'M1 1H7L4 7Z'}"/></svg>`;
});
document.querySelectorAll('[data-menu]').forEach(e => {
  e.innerHTML = e.dataset.menu.split(',').map(s => { const [t, w] = s.split(':'); return `<span style="width:${w}px">${t}</span>`; }).join('');
});
document.querySelectorAll('[data-tabs]').forEach(e => {
  e.innerHTML = e.dataset.tabs.split(',').map((s, i) => {
    const [t, w] = s.split(':');
    const cls = i ? 'border-b border-black bg-linear-to-b from-[#3c3c3c] to-[#2c2c2c]' : 'bg-[#4b4b4b]';
    return `<span class="flex h-[17px] items-center justify-center border-r border-r-black pt-[3px] pr-px text-[9.5px] leading-none whitespace-nowrap ${cls}" style="width:${w}px">${t}</span>`;
  }).join('');
});
document.querySelectorAll('[data-tools]').forEach(e => {
  let x = +e.dataset.start;
  e.innerHTML = e.dataset.tools.split(',').map(s => {
    const [, t, c, n] = s.match(/(.*)@(\d+):(.*)/), m = c - 13 - x;
    x = +c + 13;
    const two = t.includes('|');
    return `<div class="flex w-[26px] shrink-0 flex-col items-center pt-[3px]" style="margin-left:${m}px">${svg(n, 'h-[20px] w-[20px] shrink-0')}<span class="text-center text-[9.3px] whitespace-nowrap ${two ? '-mt-[3px] leading-[9px]' : 'mt-[3px] leading-[11px]'}">${t.replace('|', '<br>')}</span></div>`;
  }).join('');
});
document.querySelectorAll('[data-i]').forEach(e => { e.classList.add('shrink-0'); e.innerHTML = svg(e.dataset.i, 'block h-full w-full'); });

const rows = [['height', '1', 34], ['radius', '0.3', 21], ['twist', '1.5 * sin($PI * $F * 0.3)', 5], ['point num', '100', 164], ['thickness', '0.07', 24]];
document.getElementById('params').innerHTML = rows.map(([l, v, p], i) => {
  const ex = i === 2, w = ex ? 219 : 329;
  let ticks = '';
  if (i === 3) for (let k = 0; k < 20; k++) ticks += `<path d="M${.5 + k * 16.4} 15v2" stroke="#151515"/>`;
  return `<div class="flex h-[25px] items-center"><span class="w-[125px] text-right text-[11.3px] leading-none">${l}</span>
  <div class="ml-[14px] flex h-[23px] shrink-0 items-center border border-[#272727] pb-px pl-[3px] font-['Noto_Sans_Mono_CJK_SC','DejaVu_Sans_Mono',monospace] text-[14.1px] leading-none font-bold whitespace-pre text-white ${ex ? 'w-[198px] bg-[#478b45]' : 'w-[88px] bg-[#131313]'}">${v}</div>
  <svg class="ml-[5px] h-[23px] shrink-0" style="width:${w}px" viewBox="0 0 ${w} 23"><rect x=".5" y="8.500" width="${w - 1}" height="4" rx="1.500" fill="#555" stroke="#000"/><path d="M1 9.500H${w - 1}" stroke="#686868"/>${ex ? '' : `<path d="M1 11H${p}" stroke="#08386f" stroke-width="2"/><path d="M1 9.500H${p}" stroke="#3d5f80"/>`}${ticks}<rect x="${p - 3.5}" y=".5" width="6" height="21" rx="1" fill="#6a6a6a" stroke="#000"/><path d="M${p - .5} 2V20" stroke="#4a4a4a" stroke-width="3"/></svg></div>`;
}).join('');

const T = 'fill="#e4e4e4"', G = 'fill="#6dbb2e"';
const play = [
  `<path ${T} d="M-1 3H1.500V13H-1ZM9 3V13L3.500 8ZM17 3V13L11 8Z"/>`,
  `<path ${G} d="M3 2.500h3v11H3z"/><path ${T} d="M14 3v10L7.500 8z"/>`,
  `<path ${T} d="M9 3v10L2 8zM11 3H14v10h-3z"/>`,
  `<path ${T} d="M13 2v12L3 8z"/>`,
  `<path ${T} d="M1.500 1.500h13v13h-13z"/>`,
  `<path ${T} d="M3.500 2v12L14 8z"/>`,
  `<path ${T} d="M3 3h2.500v10H3zM8 3v10L15 8z"/>`,
  `<path ${T} d="M2.500 3v10L9 8z"/><path ${G} d="M11 2.500h3v11h-3z"/>`,
  `<path ${T} d="M-1 3v10L5 8zM7 3v10L13 8zM14.500 3H17v10h-2.500z"/>`];
document.getElementById('play').innerHTML = play.map((p, i) =>
  `<div class="flex h-[27px] w-[27px] shrink-0 items-center justify-center border-r border-black ${i === 4 ? 'bg-[#c08a1c]' : 'bg-linear-to-b from-[#585858] to-[#444]'}"><svg class="h-[16px] w-[16px] overflow-visible" viewBox="0 0 16 16">${p}</svg></div>`).join('');

let s = '<path d="M356 963.500H1749" stroke="#a9a9a9"/>';
for (let f = 6; f <= 240; f += 6) {
  const x = Math.round(350.2 + f * 5.803) + .5, M = f % 24 === 0;
  s += `<path d="M${x} ${M ? 959 : 960}V${M ? 968 : 967}" stroke="${M ? '#dcdcdc' : '#8f8f8f'}"/>`;
  if (M) s += `<text x="${x}" y="958" font-size="10.500" fill="#a8a8a8">${f === 240 ? '2' : f}</text>`;
}
s += `<rect x="356" y="947" width="21" height="18" fill="#fff"/><rect x="357" y="948" width="19" height="16" fill="#050505"/><text x="363" y="960" font-size="12" fill="#fff">1</text>
<path d="M357 965V981" stroke="#111"/><rect x="357" y="981" width="1391" height="8" fill="#474747"/><rect x="357" y="981" width="1391" height="3" fill="#515151"/><path d="M375.500 981V989M1729.500 981V989" stroke="#222"/>
<path d="M363 986.500H372M1048 986.500H1060M1736 986.500H1745" stroke="#0a0a0a" stroke-width="2" stroke-dasharray="2 1"/>`;
document.getElementById('time').innerHTML = s;
</script>
</body>
</html>
